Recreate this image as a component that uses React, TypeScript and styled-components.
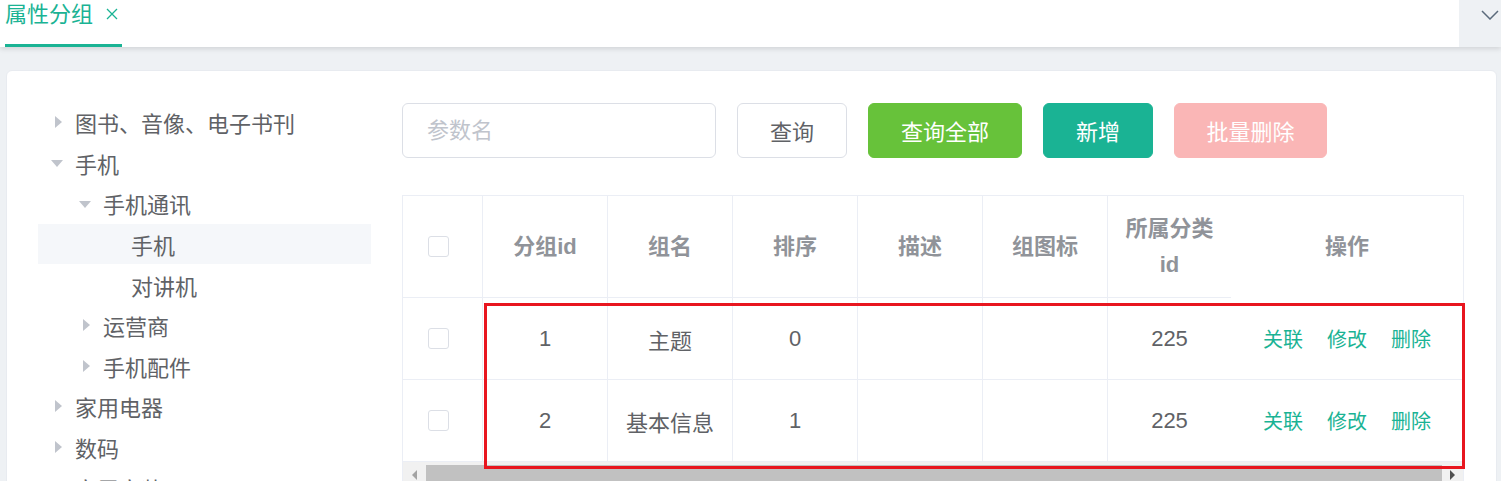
import React from "react";
import styled, { createGlobalStyle, css } from "styled-components";

const GlobalStyle = createGlobalStyle`
  html, body {
    margin: 0;
    padding: 0;
    height: 100%;
    overflow: hidden;
    background: #eef1f4;
  }
  body {
    font-family: "Liberation Sans", "Noto Sans CJK SC", sans-serif;
    color: #606266;
  }
  * { box-sizing: border-box; }
`;

const Page = styled.div`
  width: 100%;
  min-height: 100vh;
  background: #eef1f4;
`;

const TabBar = styled.div`
  height: 47px;
  display: flex;
  align-items: stretch;
  background: #fff;
  box-shadow: 0 2px 5px rgba(0, 0, 0, 0.12);
  position: relative;
  z-index: 1;
`;

const Tabs = styled.div`
  flex: 1;
  display: flex;
  padding-left: 5px;
`;

const Tab = styled.div`
  display: flex;
  align-items: flex-start;
  gap: 13px;
  padding-right: 4px;
  border-bottom: 3px solid #1ab394;
  color: #1ab394;
  font-size: 22px;
  line-height: 30px;
`;

const TabClose = styled.span`
  display: flex;
  align-items: center;
  height: 28px;
`;

const TabMenu = styled.div`
  width: 42px;
  background: #eef1f4;
  display: flex;
  align-items: flex-start;
  justify-content: flex-end;
  padding: 10px 2px 0 0;
`;

const Content = styled.div`
  padding: 23px 4px 0 6px;
`;

const Card = styled.div`
  background: #fff;
  border: 1px solid #e8ebf0;
  border-radius: 6px;
  padding: 32px 31px;
  min-height: 500px;
`;

const Layout = styled.div`
  display: grid;
  grid-template-columns: 333px 1fr;
  column-gap: 31px;
  align-items: start;
`;

const Tree = styled.div`
  display: flex;
  flex-direction: column;
  margin-top: -1px;
`;

const TreeRow = styled.div<{ $level: number; $current?: boolean }>`
  height: 40.6px;
  display: flex;
  align-items: center;
  padding-left: ${(p) => p.$level * 28}px;
  background: ${(p) => (p.$current ? "#f5f7fa" : "transparent")};
  font-size: 22px;
  color: #606266;
  white-space: nowrap;
`;

const Caret = styled.span<{ $open?: boolean; $leaf?: boolean }>`
  width: 37px;
  height: 100%;
  display: flex;
  align-items: center;
  justify-content: center;
  flex-shrink: 0;
  &::before {
    content: "";
    display: ${(p) => (p.$leaf ? "none" : "block")};
    width: 0;
    height: 0;
    ${(p) =>
      p.$open
        ? css`
            border-left: 6px solid transparent;
            border-right: 6px solid transparent;
            border-top: 7px solid #c0c4cc;
            margin-top: 2px;
          `
        : css`
            border-top: 6px solid transparent;
            border-bottom: 6px solid transparent;
            border-left: 7px solid #c0c4cc;
            margin-left: 3px;
          `}
  }
`;

const RightPane = styled.div`
  display: flex;
  flex-direction: column;
  gap: 37px;
`;

const Toolbar = styled.div`
  display: flex;
  gap: 21px;
  align-items: center;
`;

const SearchInput = styled.input`
  width: 314px;
  height: 55px;
  border: 1px solid #dcdfe6;
  border-radius: 6px;
  padding: 0 24px;
  font-family: inherit;
  font-size: 22px;
  color: #606266;
  outline: none;
  &::placeholder {
    color: #c0c4cc;
  }
`;

const variants = {
  plain: css`
    background: #fff;
    border-color: #dcdfe6;
    color: #606266;
  `,
  success: css`
    background: #67c23a;
    border-color: #67c23a;
    color: #fff;
  `,
  primary: css`
    background: #1ab394;
    border-color: #1ab394;
    color: #fff;
  `,
  danger: css`
    background: #fab6b6;
    border-color: #fab6b6;
    color: #fff;
  `,
};

const Button = styled.button<{ $variant: keyof typeof variants; $width: number }>`
  width: ${(p) => p.$width}px;
  height: 55px;
  border: 1px solid;
  border-radius: 6px;
  font-family: inherit;
  font-size: 22px;
  padding: 0 0 2px;
  cursor: pointer;
  ${(p) => variants[p.$variant]}
`;

const TableWrap = styled.div`
  position: relative;
  width: 1062px;
  border: 1px solid #ebeef5;
`;

const Grid = styled.div`
  display: grid;
  grid-template-columns: 80px repeat(5, 125px) 123px 1fr;
`;

const HeadCell = styled.div<{ $noRight?: boolean; $noBottom?: boolean; $check?: boolean }>`
  height: 102px;
  display: flex;
  align-items: center;
  justify-content: ${(p) => (p.$check ? "flex-start" : "center")};
  padding: ${(p) => (p.$check ? "0 0 0 25px" : "0 16px")};
  border-right: ${(p) => (p.$noRight ? "none" : "1px solid #ebeef5")};
  border-bottom: ${(p) => (p.$noBottom ? "none" : "1px solid #ebeef5")};
  font-size: 22px;
  line-height: 36px;
  font-weight: bold;
  color: #909399;
  text-align: center;
`;

const BodyCell = styled.div<{ $noRight?: boolean; $check?: boolean }>`
  height: 82px;
  display: flex;
  align-items: center;
  justify-content: ${(p) => (p.$check ? "flex-start" : "center")};
  padding: ${(p) => (p.$check ? "0 0 0 25px" : "0 16px")};
  border-right: ${(p) => (p.$noRight ? "none" : "1px solid #ebeef5")};
  border-bottom: 1px solid #ebeef5;
  font-size: 22px;
  color: #606266;
`;

const Checkbox = styled.span`
  width: 21px;
  height: 21px;
  border: 1px solid #dcdfe6;
  border-radius: 3px;
  background: #fff;
  display: inline-block;
`;

const OpLinks = styled.div`
  display: flex;
  gap: 24px;
`;

const OpLink = styled.a`
  color: #1ab394;
  font-size: 20px;
  text-decoration: none;
  cursor: pointer;
`;

const ScrollBar = styled.div`
  height: 26px;
  display: flex;
  background: #f1f1f1;
`;

const ScrollArrow = styled.div<{ $dir: "left" | "right"; $width: number; $dim?: boolean }>`
  width: ${(p) => p.$width}px;
  display: flex;
  align-items: center;
  justify-content: center;
  &::before {
    content: "";
    width: 0;
    height: 0;
    border-top: 5px solid transparent;
    border-bottom: 5px solid transparent;
    ${(p) =>
      p.$dir === "left"
        ? css`border-right: 5px solid ${p.$dim ? "#a3a3a3" : "#505050"};`
        : css`border-left: 5px solid ${p.$dim ? "#a3a3a3" : "#505050"};`}
  }
`;

const ScrollThumb = styled.div`
  flex: 1;
  margin: 3px 0;
  background: #c1c1c1;
`;

const Highlight = styled.div`
  position: absolute;
  left: 81px;
  top: 107px;
  width: 981px;
  height: 166px;
  border: 3px solid #e8161f;
  pointer-events: none;
`;

type Node = { label: string; level: number; open?: boolean; leaf?: boolean; current?: boolean };

const treeNodes: Node[] = [
  { label: "图书、音像、电子书刊", level: 0 },
  { label: "手机", level: 0, open: true },
  { label: "手机通讯", level: 1, open: true },
  { label: "手机", level: 2, leaf: true, current: true },
  { label: "对讲机", level: 2, leaf: true },
  { label: "运营商", level: 1 },
  { label: "手机配件", level: 1 },
  { label: "家用电器", level: 0 },
  { label: "数码", level: 0 },
  { label: "家居家装", level: 0 },
  { label: "电脑办公", level: 0 },
];

const rows = [
  { id: 1, name: "主题", sort: 0, catId: 225 },
  { id: 2, name: "基本信息", sort: 1, catId: 225 },
];

export default function App() {
  return (
    <Page>
      <GlobalStyle />
      <TabBar>
        <Tabs>
          <Tab>
            <span>属性分组</span>
            <TabClose>
              <svg width="12" height="12" viewBox="0 0 12 12">
                <path d="M1 1 L11 11 M11 1 L1 11" stroke="#1ab394" strokeWidth="1.3" fill="none" />
              </svg>
            </TabClose>
          </Tab>
        </Tabs>
        <TabMenu>
          <svg width="18" height="10" viewBox="0 0 18 10">
            <polyline points="1,1 9,9 17,1" stroke="#5b6b7c" strokeWidth="1.5" fill="none" />
          </svg>
        </TabMenu>
      </TabBar>
      <Content>
        <Card>
          <Layout>
            <Tree>
              {treeNodes.map((n, i) => (
                <TreeRow key={i} $level={n.level} $current={n.current}>
                  <Caret $open={n.open} $leaf={n.leaf} />
                  <span>{n.label}</span>
                </TreeRow>
              ))}
            </Tree>
            <RightPane>
              <Toolbar>
                <SearchInput placeholder="参数名" />
                <Button $variant="plain" $width={110}>查询</Button>
                <Button $variant="success" $width={154}>查询全部</Button>
                <Button $variant="primary" $width={110}>新增</Button>
                <Button $variant="danger" $width={153}>批量删除</Button>
              </Toolbar>
              <TableWrap>
                <Grid>
                  <HeadCell $check>
                    <Checkbox />
                  </HeadCell>
                  <HeadCell>分组id</HeadCell>
                  <HeadCell>组名</HeadCell>
                  <HeadCell>排序</HeadCell>
                  <HeadCell>描述</HeadCell>
                  <HeadCell>组图标</HeadCell>
                  <HeadCell $noRight>所属分类id</HeadCell>
                  <HeadCell $noRight $noBottom>操作</HeadCell>
                  {rows.map((r) => (
                    <React.Fragment key={r.id}>
                      <BodyCell $check>
                        <Checkbox />
                      </BodyCell>
                      <BodyCell>{r.id}</BodyCell>
                      <BodyCell>{r.name}</BodyCell>
                      <BodyCell>{r.sort}</BodyCell>
                      <BodyCell />
                      <BodyCell />
                      <BodyCell $noRight>{r.catId}</BodyCell>
                      <BodyCell $noRight>
                        <OpLinks>
                          <OpLink>关联</OpLink>
                          <OpLink>修改</OpLink>
                          <OpLink>删除</OpLink>
                        </OpLinks>
                      </BodyCell>
                    </React.Fragment>
                  ))}
                </Grid>
                <ScrollBar>
                  <ScrollArrow $dir="left" $width={23} $dim />
                  <ScrollThumb />
                  <ScrollArrow $dir="right" $width={21} />
                </ScrollBar>
                <Highlight />
              </TableWrap>
            </RightPane>
          </Layout>
        </Card>
      </Content>
    </Page>
  );
}
